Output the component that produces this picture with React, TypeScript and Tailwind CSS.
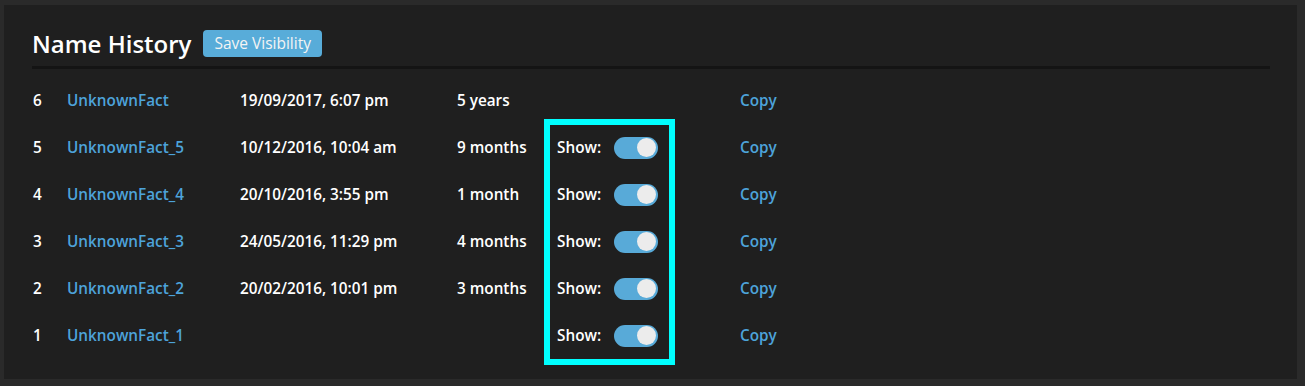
import React, { useState } from 'react';

interface NameEntry {
  id: number;
  name: string;
  changedAt?: string;
  duration?: string;
  toggle: boolean;
}

const initialNames: NameEntry[] = [
  { id: 6, name: 'UnknownFact', changedAt: '19/09/2017, 6:07 pm', duration: '5 years', toggle: false },
  { id: 5, name: 'UnknownFact_5', changedAt: '10/12/2016, 10:04 am', duration: '9 months', toggle: true },
  { id: 4, name: 'UnknownFact_4', changedAt: '20/10/2016, 3:55 pm', duration: '1 month', toggle: true },
  { id: 3, name: 'UnknownFact_3', changedAt: '24/05/2016, 11:29 pm', duration: '4 months', toggle: true },
  { id: 2, name: 'UnknownFact_2', changedAt: '20/02/2016, 10:01 pm', duration: '3 months', toggle: true },
  { id: 1, name: 'UnknownFact_1', toggle: true },
];

const Toggle: React.FC<{ on: boolean; onChange: () => void }> = ({ on, onChange }) => (
  <button
    type="button"
    onClick={onChange}
    className={`relative w-[44px] h-[22px] rounded-full ${on ? 'bg-[#58aad8]' : 'bg-[#555]'}`}
  >
    <span
      className={`absolute top-[1.5px] w-[19px] h-[19px] rounded-full bg-[#ececec] ${on ? 'right-[2px]' : 'left-[2px]'}`}
    />
  </button>
);

const App: React.FC = () => {
  const [names, setNames] = useState<NameEntry[]>(initialNames);
  const [visible, setVisible] = useState<Record<number, boolean>>({ 5: true, 4: true, 3: true, 2: true, 1: true });

  const flip = (id: number) => setVisible(prev => ({ ...prev, [id]: !prev[id] }));

  return (
    <div className="min-h-[386px] bg-[#2a2a2a] pt-[5px] pl-[4px] pr-[8px] pb-[6px] font-['Open_Sans',sans-serif]">
      <div className="bg-[#1f1f1f] pt-[25px] pl-[28px] pr-[27px] pb-[20px]">
        <div className="flex items-center gap-[12px]">
          <h2 className="text-[24px] leading-[27px] font-semibold text-white">Name History</h2>
          <button
            onClick={() => setNames([...names])}
            className="h-[27px] px-[11px] rounded-[4px] bg-[#58acd9] text-[15.5px] text-[#f4f4f4]"
          >
            Save Visibility
          </button>
        </div>
        <div className="mt-[9px] h-[3px] bg-[#141414]" />

        <div className="relative mt-[8px]">
          {names.map(n => (
            <div
              key={n.id}
              className="grid grid-cols-[35px_173px_217px_100px_182px_auto] h-[47px] items-center text-[15.3px] font-semibold text-white"
            >
              <div className="pl-[1px]">{n.id}</div>
              <a className="text-[#4da3da]">{n.name}</a>
              <div>{n.changedAt}</div>
              <div>{n.duration}</div>
              <div className="flex items-center gap-[13px]">
                {n.toggle && (
                  <>
                    <span>Show:</span>
                    <Toggle on={!!visible[n.id]} onChange={() => flip(n.id)} />
                  </>
                )}
              </div>
              <a className="text-[#4da3da] pl-[1px]">Copy</a>
            </div>
          ))}
          {/* highlight around the show toggles */}
          <div className="absolute left-[512px] top-[42px] w-[131px] h-[246px] border-[6px] border-[#00ffff] pointer-events-none" />
        </div>
      </div>
    </div>
  );
};

export default App;
